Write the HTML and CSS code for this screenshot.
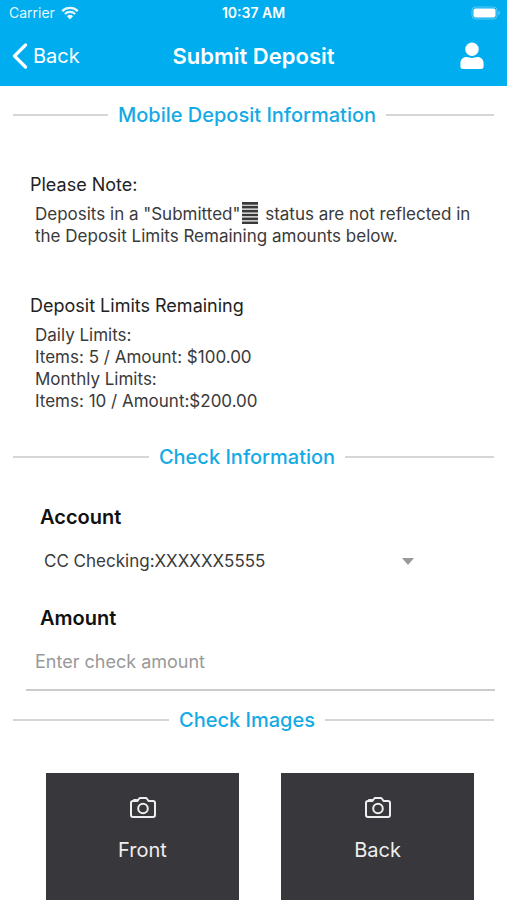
FILE: index.html
```html
<!DOCTYPE html>
<html lang="en">
<head>
<meta charset="utf-8">
<meta name="viewport" content="width=device-width, initial-scale=1">
<title>Submit Deposit</title>
<link rel="stylesheet" href="styles.css">
</head>
<body>
<header class="header">
  <div class="status">
    <div class="carrier">
      <span>Carrier</span>
      <svg class="wifi" viewBox="0 0 18 14" aria-hidden="true">
        <path d="M1.2 5.1a11.2 11.2 0 0 1 15.6 0M3.9 8a7.3 7.3 0 0 1 10.2 0" fill="none" stroke="currentColor" stroke-width="2.3"/>
        <path d="M9 13.4 5.9 10.2a4.5 4.5 0 0 1 6.2 0z" fill="currentColor"/>
      </svg>
    </div>
    <time class="clock">10:37 AM</time>
    <svg class="battery" viewBox="0 0 30 14" aria-hidden="true">
      <rect x="1" y="1" width="25" height="12" rx="3.5" fill="none" stroke="currentColor" opacity=".35"/>
      <rect x="2.5" y="2.5" width="22" height="9" rx="2" fill="currentColor"/>
      <path d="M27.5 5v4a2.2 2.2 0 0 0 0-4z" fill="currentColor" opacity=".5"/>
    </svg>
  </div>
  <nav class="nav">
    <a class="back" href="#">
      <svg class="chevron" viewBox="0 0 16 26" aria-hidden="true"><path d="M13.5 2 2.5 13l11 11" fill="none" stroke="currentColor" stroke-width="3.2" stroke-linecap="round" stroke-linejoin="round"/></svg>
      <span>Back</span>
    </a>
    <h1 class="title">Submit Deposit</h1>
    <button class="profile" type="button" aria-label="Profile">
      <svg class="person" viewBox="0 0 24 28" aria-hidden="true">
        <circle cx="12" cy="7.2" r="6.7" fill="currentColor"/>
        <path d="M.4 24.500V21.500c0-4 2.600-6.500 6.200-6.500 2.200 0 3 1 5.400 1s3.200-1 5.400-1c3.600 0 6.200 2.500 6.200 6.500v3c0 1.600-.9 2.500-2.500 2.500H2.900C1.300 27 .4 26.100.4 24.500z" fill="currentColor"/>
      </svg>
    </button>
  </nav>
</header>
<main>
  <h2 class="divider">Mobile Deposit Information</h2>
  <section class="info">
    <h3 class="info-title">Please Note:</h3>
    <p class="info-text">Deposits in a "Submitted"<svg class="bars" viewBox="0 0 16 22" aria-hidden="true"><path d="M0 1.300h16M0 5.200h16M0 9.100h16M0 13h16M0 16.900h16M0 20.800h16" stroke="currentColor" stroke-width="2.700"/></svg> status are not reflected in<br>the Deposit Limits Remaining amounts below.</p>
  </section>
  <section class="info">
    <h3 class="info-title">Deposit Limits Remaining</h3>
    <p class="info-text">Daily Limits:<br>Items: 5 / Amount: $100.00<br>Monthly Limits:<br>Items: 10 / Amount:$200.00</p>
  </section>
  <h2 class="divider">Check Information</h2>
  <form class="form">
    <label class="label" for="account">Account</label>
    <div class="select-row">
      <select class="select" id="account"><option>CC Checking:XXXXXX5555</option></select>
      <svg class="caret" viewBox="0 0 12 7" aria-hidden="true"><path d="M0 0h12L6 7z" fill="currentColor"/></svg>
    </div>
    <label class="label" for="amount">Amount</label>
    <input class="amount" id="amount" type="text" inputmode="decimal" placeholder="Enter check amount">
  </form>
  <h2 class="divider">Check Images</h2>
  <div class="tiles">
    <button class="tile" type="button">
      <svg class="camera" viewBox="0 0 26 21" aria-hidden="true"><path d="M3 4h4.500L9 1.800q.5-.8 1.300-.8h5.400q.8 0 1.300.8L18.500 4H23q2 0 2 2v12q0 2-2 2H3q-2 0-2-2V6q0-2 2-2zM4 4V3h2.500v1"/><circle cx="13" cy="11.500" r="4.800"/></svg>
      <span>Front</span>
    </button>
    <button class="tile" type="button">
      <svg class="camera" viewBox="0 0 26 21" aria-hidden="true"><path d="M3 4h4.500L9 1.800q.5-.8 1.300-.8h5.400q.8 0 1.300.8L18.500 4H23q2 0 2 2v12q0 2-2 2H3q-2 0-2-2V6q0-2 2-2zM4 4V3h2.500v1"/><circle cx="13" cy="11.500" r="4.800"/></svg>
      <span>Back</span>
    </button>
  </div>
</main>
</body>
</html>
```
FILE: styles.css
```css
* { box-sizing: border-box; }

body {
  margin: 0;
  background: #fff;
  color: #3a3a3a;
  font-family: Inter, "Liberation Sans", sans-serif;
  font-size: 17px;
  line-height: 22px;
}

h1, h2, h3, p { margin: 0; }

button {
  border: 0;
  padding: 0;
  background: none;
  color: inherit;
  font: inherit;
}

svg { display: block; }

.header {
  background: #00aeef;
  color: #fff;
}

.status, .nav {
  display: grid;
  grid-template-columns: 1fr auto 1fr;
  align-items: center;
}

.status {
  height: 26px;
  padding: 0 6px;
  font-size: 14px;
}

.carrier { display: flex; align-items: center; gap: 6px; padding-left: 3px; opacity: .9; }
.wifi { width: 18px; height: 14px; }
.clock { font-weight: 600; }
.battery { width: 30px; height: 14px; justify-self: end; }

.nav {
  height: 60px;
  padding: 0 12px;
}

.back {
  display: flex;
  align-items: center;
  gap: 5px;
  color: #fff;
  font-size: 20px;
  text-decoration: none;
}

.chevron { width: 16px; height: 26px; }
.title { font-size: 22px; line-height: 28px; font-weight: 600; }
.profile { justify-self: end; padding-right: 11px; }
.person { width: 24px; height: 28px; }

.divider {
  display: flex;
  align-items: center;
  gap: 10px;
  padding: 0 13px;
  color: #14aae5;
  font-size: 20px;
  line-height: 28px;
  font-weight: 500;
  margin-top: 15px;
}

.divider::before, .divider::after {
  content: "";
  flex: 1 1 0;
  height: 2px;
  background: #d6d6d6;
}

.divider::after { flex-basis: 13px; }

.info { padding: 45px 26px 0 30px; }
.info + .info { padding-top: 48px; }
.info-title { color: #222; font-size: 18px; line-height: 22px; font-weight: 400; }
.info-text { padding: 7px 0 0 5px; }
.bars { display: inline-block; width: 16px; height: 22px; vertical-align: -4px; margin: -4px 2px 0; }

.info + .divider { margin-top: 31px; }

.form { padding: 35px 12px 0 26px; }
.label { display: block; padding-left: 14px; color: #111; font-size: 20px; line-height: 22px; font-weight: 600; }

.select-row { display: flex; align-items: center; padding: 10px 81px 0 18px; margin-bottom: 23px; }
.select {
  flex: 1;
  min-width: 0;
  height: 46px;
  border: 0;
  padding: 0;
  appearance: none;
  background: none;
  color: #3a3a3a;
  font: inherit;
}
.caret { width: 12px; height: 7px; color: #999; }

.amount {
  display: block;
  width: 100%;
  height: 62px;
  border: 0;
  border-bottom: 2px solid #ccc;
  padding: 4px 9px 0;
  background: none;
  color: #3a3a3a;
  font: inherit;
  font-size: 18px;
}
.amount::placeholder { color: #999; opacity: 1; }

.tiles {
  display: grid;
  grid-template-columns: 1fr 1fr;
  gap: 42px;
  padding: 39px 33px 0 46px;
}

.tile {
  display: flex;
  flex-direction: column;
  align-items: center;
  gap: 18px;
  height: 127px;
  padding-top: 24px;
  background: #38373b;
  color: #eee;
  font-size: 20px;
  line-height: 28px;
}

.camera {
  width: 26px;
  height: 21px;
  fill: none;
  stroke: currentColor;
  stroke-width: 2;
  stroke-linejoin: round;
}
```
